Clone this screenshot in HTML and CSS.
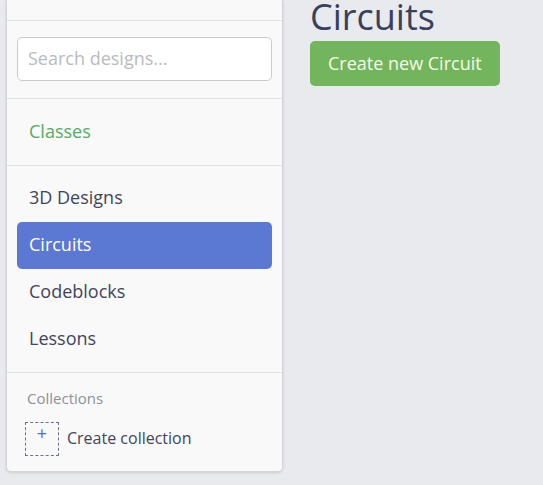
FILE: index.html
```html
<!DOCTYPE html>
<html>
<head>
<meta charset="utf-8">
<link rel="stylesheet" href="styles.css">
</head>
<body>
<div class="page">
  <aside class="sidebar">
    <div class="sec-top"></div>
    <div class="sec-search">
      <input class="search" type="text" placeholder="Search designs...">
    </div>
    <div class="sec-classes">
      <a class="classes">Classes</a>
    </div>
    <nav class="nav">
      <a class="item">3D Designs</a>
      <a class="item active">Circuits</a>
      <a class="item">Codeblocks</a>
      <a class="item">Lessons</a>
    </nav>
    <div class="sec-coll">
      <div class="coll-title">Collections</div>
      <div class="coll-create">
        <span class="plus-box"><span class="plus">+</span></span>
        <span class="coll-label">Create collection</span>
      </div>
    </div>
  </aside>
  <main class="main">
    <h1 class="title">Circuits</h1>
    <button class="btn">Create new Circuit</button>
  </main>
</div>
</body>
</html>
```
FILE: styles.css
```css
* { box-sizing: border-box; }
html, body { margin: 0; padding: 0; }
body {
  background: #e9eaed;
  font-family: "Open Sans", "Noto Sans", sans-serif;
  color: #3c4059;
  width: 543px;
  height: 485px;
  overflow: hidden;
}
.page {
  display: flex;
  align-items: flex-start;
}
.sidebar {
  margin-left: 6px;
  width: 277px;
  background: #f9f9fa;
  border: 1px solid #d3d5da;
  border-top: none;
  border-radius: 0 0 5px 5px;
  box-shadow: 0 1px 3px rgba(0,0,0,0.12);
}
.sec-top {
  height: 21px;
  border-bottom: 1px solid #e0e1e4;
}
.sec-search {
  padding: 16px 10px 17px;
  border-bottom: 1px solid #e0e1e4;
}
.search {
  display: block;
  width: 100%;
  height: 44px;
  border: 1px solid #c9cbcf;
  border-radius: 5px;
  background: #ffffff;
  padding: 0 10px 2px;
  font-family: inherit;
  font-size: 18px;
  color: #3c4059;
  outline: none;
}
.search::placeholder { color: #b9bbc0; }
.sec-classes {
  height: 67px;
  display: flex;
  align-items: center;
  padding-left: 22px;
  padding-bottom: 2px;
  border-bottom: 1px solid #e0e1e4;
}
.classes {
  font-size: 18px;
  color: #52ad63;
}
.nav {
  display: flex;
  flex-direction: column;
  padding: 9px 10px;
  border-bottom: 1px solid #e0e1e4;
}
.item {
  height: 47px;
  display: flex;
  align-items: center;
  padding-left: 12px;
  padding-bottom: 3px;
  border-radius: 5px;
  font-size: 18px;
  color: #41455c;
}
.item.active {
  background: #5b78d3;
  color: #ffffff;
}
.sec-coll {
  padding: 14px 18px 15px;
}
.coll-title {
  font-size: 15px;
  line-height: 22px;
  color: #8e9197;
  padding-left: 2px;
}
.coll-create {
  margin-top: 13px;
  display: flex;
  align-items: center;
  gap: 8px;
}
.plus-box {
  width: 34px;
  height: 34px;
  border: 1px dashed #6a6f93;
  display: flex;
  justify-content: center;
  align-items: flex-start;
}
.plus {
  font-size: 18px;
  line-height: 18px;
  color: #5b6bc2;
  margin-top: 1px;
}
.coll-label {
  font-size: 16px;
  color: #41455c;
  margin-bottom: 2px;
}
.main {
  margin-left: 27px;
  display: flex;
  flex-direction: column;
  align-items: flex-start;
}
.title {
  margin: 0;
  font-weight: 400;
  font-size: 36px;
  line-height: 34px;
  color: #3a3f5c;
}
.btn {
  margin-top: 7px;
  height: 45px;
  padding: 0 18px 2px 18px;
  border: none;
  border-radius: 5px;
  background: #73b55d;
  color: #f4fbea;
  font-family: inherit;
  font-size: 18px;
}
```
